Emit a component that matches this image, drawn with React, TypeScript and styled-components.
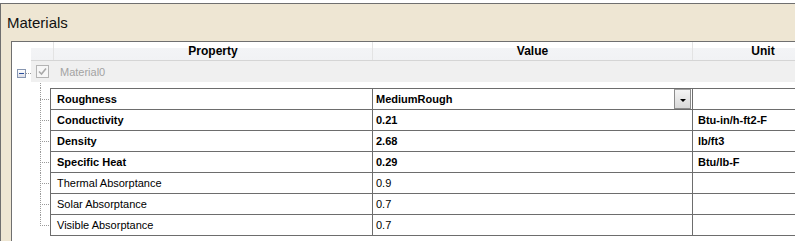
import React from "react";
import styled, { createGlobalStyle } from "styled-components";

type Prop = {
   name: string;
   value: string;
   unit?: string;
   bold?: boolean;
   dropdown?: boolean;
};

const properties: Prop[] = [
   { name: "Roughness", value: "MediumRough", bold: true, dropdown: true },
   { name: "Conductivity", value: "0.21", unit: "Btu-in/h-ft2-F", bold: true },
   { name: "Density", value: "2.68", unit: "lb/ft3", bold: true },
   { name: "Specific Heat", value: "0.29", unit: "Btu/lb-F", bold: true },
   { name: "Thermal Absorptance", value: "0.9" },
   { name: "Solar Absorptance", value: "0.7" },
   { name: "Visible Absorptance", value: "0.7" },
];

const App = (): JSX.Element => {
   return (
      <>
         <GlobalStyle />
         <Window>
            <Title>Materials</Title>
            <Panel>
               <HeaderRow>
                  <Gutter />
                  <HeaderBar>
                     <HeaderCell $width={23} />
                     <HeaderCell $width={319}>Property</HeaderCell>
                     <HeaderCell $width={320}>Value</HeaderCell>
                     <HeaderCell $width={141}>Unit</HeaderCell>
                  </HeaderBar>
               </HeaderRow>

               <GroupRow>
                  <Gutter>
                     <Expander>
                        <Minus />
                     </Expander>
                     <Dots />
                  </Gutter>
                  <GroupBar>
                     <CheckBox>
                        <svg width="11" height="11" viewBox="0 0 11 11">
                           <path d="M2 5.5 L4.5 8 L9 2.5" fill="none" stroke="#a9a9a9" strokeWidth="1.6" />
                        </svg>
                     </CheckBox>
                     <GroupLabel>Material0</GroupLabel>
                  </GroupBar>
               </GroupRow>

               <TreeGap />
               {properties.map((p, i) => (
                  <PropRow key={p.name}>
                     <Stub $last={i === properties.length - 1} />
                     <Cells $first={i === 0}>
                        <Cell $width={322} $pad={6} $bold={p.bold}>
                           {p.name}
                        </Cell>
                        <Cell $width={320} $pad={3} $bold={p.bold}>
                           <CellText>{p.value}</CellText>
                           {p.dropdown && (
                              <DropButton>
                                 <Arrow />
                              </DropButton>
                           )}
                        </Cell>
                        <Cell $width={141} $pad={5} $bold={p.bold}>
                           {p.unit}
                        </Cell>
                     </Cells>
                  </PropRow>
               ))}
            </Panel>
         </Window>
      </>
   );
};

export default App;

const GlobalStyle = createGlobalStyle`
   html, body {
      margin: 0;
      background: #ffffff;
      overflow: hidden;
      font-family: "Liberation Sans", Arial, sans-serif;
   }
`;

const Window = styled.div`
   margin-top: 3px;
   width: 900px;
   height: 238px;
   box-sizing: border-box;
   border-top: 1px solid #6f6f6f;
   border-left: 1px solid #6f6f6f;
   background: #eee6d3;
   display: flex;
   flex-direction: column;
`;

const Title = styled.div`
   padding: 10px 0 0 6px;
   font-size: 15px;
   line-height: 17px;
   color: #111;
`;

const Panel = styled.div`
   margin: 10px 0 0 10px;
   flex: 1;
   background: #ffffff;
   border-top: 1px solid #6f6f6f;
   border-left: 1px solid #6f6f6f;
`;

const HeaderRow = styled.div`
   display: flex;
   height: 19px;
`;

const Gutter = styled.div`
   width: 19px;
   flex: none;
   display: flex;
   align-items: center;
   padding-left: 5px;
   box-sizing: border-box;
`;

const HeaderBar = styled.div`
   display: flex;
   flex: 1;
   box-sizing: border-box;
   border-bottom: 1px solid #d5d5d5;
   background: linear-gradient(to bottom, #ffffff 0, #ffffff 35%, #f3f4f6 36%, #f1f2f4 100%);
`;

const HeaderCell = styled.div<{ $width: number }>`
   width: ${(p) => p.$width}px;
   flex: none;
   box-sizing: border-box;
   border-right: 1px solid #e3e3e3;
   text-align: center;
   font-size: 12px;
   font-weight: bold;
   line-height: 18px;
   color: #000;
`;

const GroupRow = styled.div`
   display: flex;
   height: 21px;
`;

const Expander = styled.div`
   width: 9px;
   height: 9px;
   margin-top: 3px;
   flex: none;
   box-sizing: border-box;
   border: 1px solid #8796b0;
   background: linear-gradient(to bottom, #ffffff, #dcdde6);
   display: flex;
   align-items: center;
   justify-content: center;
`;

const Minus = styled.div`
   width: 5px;
   height: 1px;
   background: #2a4e9c;
`;

const Dots = styled.div`
   flex: 1;
   height: 0;
   margin-top: 3px;
   border-top: 1px dotted #9a9a9a;
`;

const GroupBar = styled.div`
   flex: 1;
   display: flex;
   align-items: center;
   padding-left: 5px;
   background: #f0f0f0;
`;

const CheckBox = styled.div`
   width: 13px;
   height: 13px;
   box-sizing: border-box;
   border: 1px solid #b4b4b4;
   background: #f7f7f7;
   display: flex;
   align-items: center;
   justify-content: center;
   margin-right: 11px;
`;

const GroupLabel = styled.span`
   font-size: 11px;
   color: #a3a3a3;
`;

const dotsDown = "repeating-linear-gradient(to bottom, #9a9a9a 0 1px, transparent 1px 2px)";
const dotsRight = "repeating-linear-gradient(to right, #9a9a9a 0 1px, transparent 1px 2px)";

const TreeGap = styled.div`
   height: 6px;
   width: 38px;
   background: ${dotsDown} 28px 1px / 1px 100% no-repeat;
`;

const PropRow = styled.div`
   display: flex;
`;

const Stub = styled.div<{ $last: boolean }>`
   width: 38px;
   flex: none;
   background:
      ${dotsDown} 28px 0 / 1px ${(p) => (p.$last ? "50%" : "100%")} no-repeat,
      ${dotsRight} 28px 50% / 10px 1px no-repeat;
`;

const Cells = styled.div<{ $first: boolean }>`
   display: flex;
   height: ${(p) => (p.$first ? 22 : 21)}px;
   box-sizing: border-box;
   border-left: 1px solid #6d6d6d;
   border-bottom: 1px solid #6d6d6d;
   border-top: ${(p) => (p.$first ? "1px solid #6d6d6d" : "none")};
`;

const Cell = styled.div<{ $width: number; $pad: number; $bold?: boolean }>`
   width: ${(p) => p.$width}px;
   flex: none;
   box-sizing: border-box;
   border-right: 1px solid #6d6d6d;
   padding-left: ${(p) => p.$pad}px;
   display: flex;
   align-items: center;
   font-size: 11px;
   font-weight: ${(p) => (p.$bold ? "bold" : "normal")};
   color: #000;
   white-space: nowrap;
`;

const CellText = styled.span`
   flex: 1;
`;

const DropButton = styled.div`
   width: 17px;
   height: 100%;
   margin-right: 1px;
   box-sizing: border-box;
   border: 1px solid #8c8c8c;
   border-top-color: #a0a0a0;
   background: linear-gradient(to bottom, #f4f4f4, #d9d9d9);
   display: flex;
   align-items: center;
   justify-content: center;
`;

const Arrow = styled.div`
   width: 0;
   height: 0;
   border-left: 3px solid transparent;
   border-right: 3px solid transparent;
   border-top: 3px solid #000;
   margin-top: 2px;
`;
